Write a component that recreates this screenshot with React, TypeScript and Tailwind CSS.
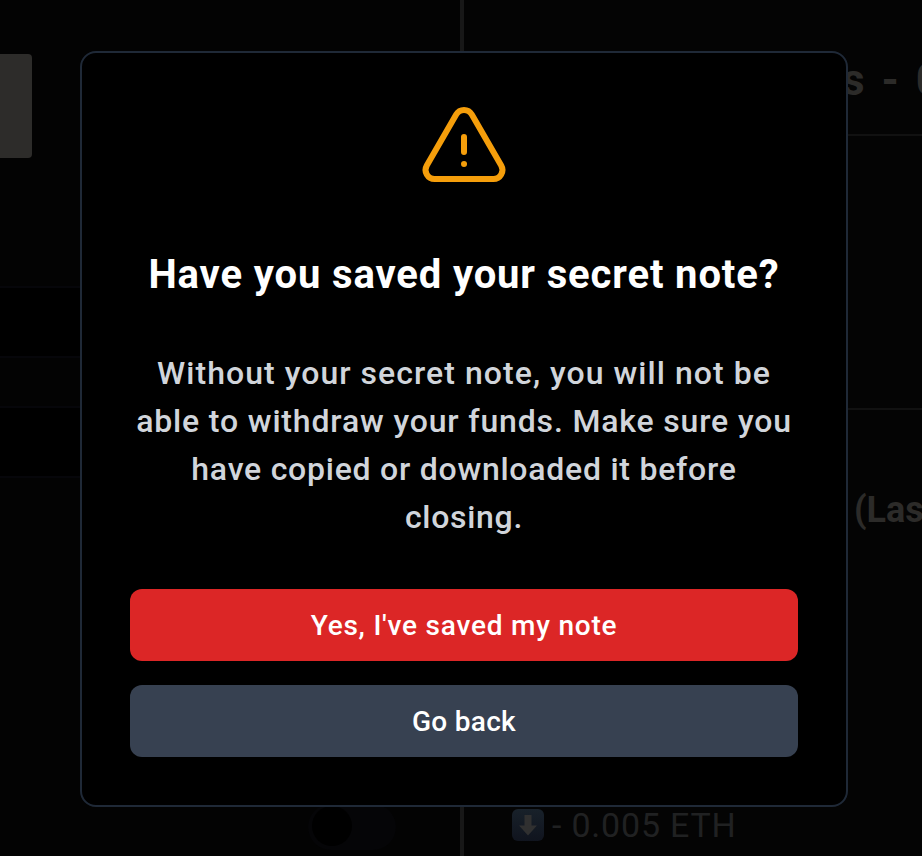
const messageLines = [
  { text: "Without your secret note, you will not be", tracking: "tracking-[1.04px]" },
  { text: "able to withdraw your funds. Make sure you", tracking: "tracking-[0.84px]" },
  { text: "have copied or downloaded it before", tracking: "tracking-[0.75px]" },
  { text: "closing.", tracking: "tracking-[0.7px]" },
];

function WarningIcon() {
  return (
    <svg
      className="h-24 w-24 text-[#f59e0b]"
      fill="none"
      viewBox="0 0 24 24"
      strokeWidth={1.5}
      stroke="currentColor"
    >
      <path
        strokeLinecap="round"
        strokeLinejoin="round"
        d="M12 9v3.75m-9.303 3.376c-.866 1.5.217 3.374 1.948 3.374h14.71c1.73 0 2.813-1.874 1.948-3.374L13.949 3.378c-.866-1.5-3.032-1.5-3.898 0L2.697 16.126ZM12 15.75h.007v.008H12v-.008Z"
      />
    </svg>
  );
}

function DownIcon() {
  return (
    <svg className="h-8 w-8 shrink-0" viewBox="0 0 32 32">
      <defs>
        <linearGradient id="tile" x1="0" y1="0" x2="0" y2="1">
          <stop offset="0" stopColor="#18212a" />
          <stop offset="1" stopColor="#10141e" />
        </linearGradient>
      </defs>
      <rect width="32" height="32" rx="6" fill="url(#tile)" />
      <path d="M12.5 6h7v10.500h5.500L16 26.500 7 16.500h5.500Z" fill="#303030" />
    </svg>
  );
}

function SidePanel() {
  return (
    <div className="flex w-[460px] shrink-0 flex-col bg-[#030303]">
      <div className="h-[286px] pt-[54px]">
        <div className="h-[104px] w-8 rounded-r-[4px] bg-[#2d2c2a]" />
      </div>
      <div className="h-[70px] border-t-2 border-[#06060a] bg-black" />
      <div className="h-[50px] border-t-2 border-[#06060a]" />
      <div className="h-[70px] border-t-2 border-[#06060a] bg-black" />
      <div className="flex flex-1 items-end border-t-2 border-[#06060a] pb-[6px] pl-[308px]">
        <div className="flex h-[46px] w-[88px] items-start rounded-full bg-[#050507] pl-1 pt-[2px]">
          <div className="h-10 w-10 rounded-full bg-black" />
        </div>
      </div>
    </div>
  );
}

function StatsPanel() {
  return (
    <div className="flex min-w-0 flex-1 flex-col overflow-hidden whitespace-nowrap border-l-4 border-[#181818] bg-[#040404] text-[#2c2b29]">
      <div className="h-[136px] border-b-2 border-[#111111] pl-[378px] pt-[54px]">
        <h1 className="text-[44px] font-bold leading-[52px] tracking-[3px]">s - 0</h1>
      </div>
      <div className="h-[274px] border-b-2 border-[#111111]" />
      <div className="flex-1 pl-[390px] pt-[76px]">
        <h2 className="text-[36px] font-bold leading-[48px]">(Las</h2>
      </div>
      <div className="flex h-[62px] items-center gap-2 pl-12 text-[34px] text-[#202122]">
        <DownIcon />
        <span className="tracking-[0.8px]">- 0.005 ETH</span>
      </div>
    </div>
  );
}

function ConfirmDialog() {
  return (
    <div className="flex h-[756px] w-[768px] flex-col rounded-2xl border-2 border-[#1f2937] bg-black p-12 text-center">
      <div className="flex justify-center">
        <WarningIcon />
      </div>
      <h2 className="mt-[50px] whitespace-nowrap text-[40px] font-bold leading-[56px] tracking-[0.87px] text-white">
        Have you saved your secret note?
      </h2>
      <p className="mt-[46px] text-[32px] font-medium leading-[48px] text-[#d1d5db]">
        {messageLines.map((line) => (
          <span key={line.text} className={`block whitespace-nowrap ${line.tracking}`}>
            {line.text}
          </span>
        ))}
      </p>
      <div className="mt-12 flex flex-col gap-6">
        <button className="h-[72px] rounded-xl bg-[#dc2626] pt-[2px] text-[28px] font-medium tracking-[0.78px] text-white">
          Yes, I've saved my note
        </button>
        <button className="h-[72px] rounded-xl bg-[#374151] pt-[2px] text-[28px] font-medium tracking-[0.3px] text-white">
          Go back
        </button>
      </div>
    </div>
  );
}

export default function App() {
  return (
    <main className="relative flex h-[856px] w-[922px] overflow-hidden bg-black font-['Roboto',sans-serif]">
      <SidePanel />
      <StatsPanel />
      <div className="absolute inset-0 pl-20 pt-[51px]">
        <ConfirmDialog />
      </div>
    </main>
  );
}
